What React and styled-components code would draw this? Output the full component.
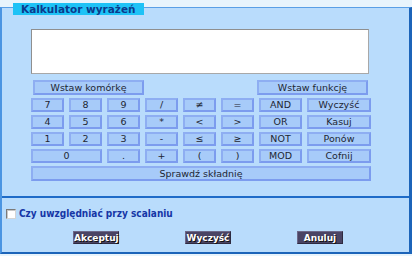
import React from 'react';
import styled, { createGlobalStyle } from 'styled-components';

const Global = createGlobalStyle`
  html, body {
    margin: 0;
    padding: 0;
    background: #e8f4fc;
  }
  * {
    box-sizing: border-box;
  }
`;

const Page = styled.div`
  width: 412px;
  height: 256px;
  padding-top: 7px;
  background: #e8f4fc;
  font-family: 'DejaVu Sans', Verdana, sans-serif;
  overflow: hidden;
`;

const Panel = styled.div`
  height: 247px;
  background: #b9dcfc;
  border-top: 1px solid #5a9fe6;
  border-left: 2px solid #4b95e2;
  border-right: 3px solid #1c64b9;
  border-bottom: 2px solid #1c64b9;
  display: flex;
  flex-direction: column;
`;

const Tab = styled.div`
  align-self: flex-start;
  margin: -5px 0 0 11px;
  height: 12px;
  padding: 0 8px 0 8px;
  background: #1ec2f6;
  color: #0b3a8c;
  font-size: 10.5px;
  font-weight: bold;
  line-height: 12px;
`;

const Calc = styled.div`
  padding: 14px 0 0 29px;
  width: 367px;
  display: flex;
  flex-direction: column;
`;

const Expr = styled.div`
  height: 45px;
  background: #fff;
  border: 1px solid #8f8f8f;
  border-right-color: #a8a8a8;
  border-bottom-color: #a8a8a8;
`;

const TopRow = styled.div`
  display: flex;
  justify-content: space-between;
  padding: 0 1px 0 2px;
  margin-top: 6px;
`;

const Key = styled.button`
  height: ${({ tall }) => (tall ? 15 : 14)}px;
  width: ${({ w }) => (w ? `${w}px` : 'auto')};
  padding: 0;
  margin: 0;
  background: #a7cbf9;
  border: 2px solid #8eaef2;
  border-bottom-color: #7c9cee;
  border-right-color: #7c9cee;
  color: #1d2633;
  font-family: 'DejaVu Sans', Verdana, sans-serif;
  font-size: 9.5px;
  line-height: 10px;
  text-align: center;
  grid-column: ${({ span }) => (span ? `span ${span}` : 'auto')};
`;

const Pad = styled.div`
  display: grid;
  grid-template-columns: repeat(6, 33px) 43px 64px;
  column-gap: 5px;
  row-gap: 3px;
  margin-top: 3px;
`;

const Rule = styled.div`
  height: 2px;
  background: #1e6bc8;
  margin-top: 15px;
`;

const Option = styled.label`
  display: flex;
  align-items: center;
  gap: 3px;
  margin: 10px 0 0 4px;
  color: #1536a6;
  font-family: 'DejaVu Sans Condensed', 'DejaVu Sans', sans-serif;
  font-size: 10px;
  font-weight: bold;
`;

const Box = styled.span`
  width: 10px;
  height: 10px;
  background: #fff;
  border: 1px solid #7a7a7a;
  border-right-color: #d4d4d4;
  border-bottom-color: #d4d4d4;
  box-shadow: inset 1px 1px #c8c8c8;
`;

const Actions = styled.div`
  display: flex;
  gap: 66px;
  padding-left: 71px;
  margin-top: 12px;
`;

const Action = styled.button`
  width: 46px;
  height: 13px;
  padding: 0;
  background: #4a4464;
  border: 1px solid #6d6888;
  border-bottom-color: #2e2a40;
  border-right-color: #2e2a40;
  color: #fff;
  font-family: 'DejaVu Sans', Verdana, sans-serif;
  font-size: 9px;
  font-weight: bold;
  line-height: 10px;
  text-shadow: 1px 1px 0 #111;
`;

const rows = [
  ['7', '8', '9', '/', '≠', '=', 'AND', 'Wyczyść'],
  ['4', '5', '6', '*', '<', '>', 'OR', 'Kasuj'],
  ['1', '2', '3', '-', '≤', '≥', 'NOT', 'Ponów'],
];

const last = ['.', '+', '(', ')', 'MOD', 'Cofnij'];

export default function App() {
  return (
    <Page>
      <Global />
      <Panel>
        <Tab>Kalkulator wyrażeń</Tab>
        <Calc>
          <Expr />
          <TopRow>
            <Key w={111} tall>Wstaw komórkę</Key>
            <Key w={111} tall>Wstaw funkcję</Key>
          </TopRow>
          <Pad>
            {rows.map((r) => r.map((k) => <Key key={k}>{k}</Key>))}
            <Key span={2}>0</Key>
            {last.map((k) => (
              <Key key={k}>{k}</Key>
            ))}
            <Key span={8} tall>
              Sprawdź składnię
            </Key>
          </Pad>
        </Calc>
        <Rule />
        <Option>
          <Box />
          Czy uwzględniać przy scalaniu
        </Option>
        <Actions>
          <Action>Akceptuj</Action>
          <Action>Wyczyść</Action>
          <Action>Anuluj</Action>
        </Actions>
      </Panel>
    </Page>
  );
}
